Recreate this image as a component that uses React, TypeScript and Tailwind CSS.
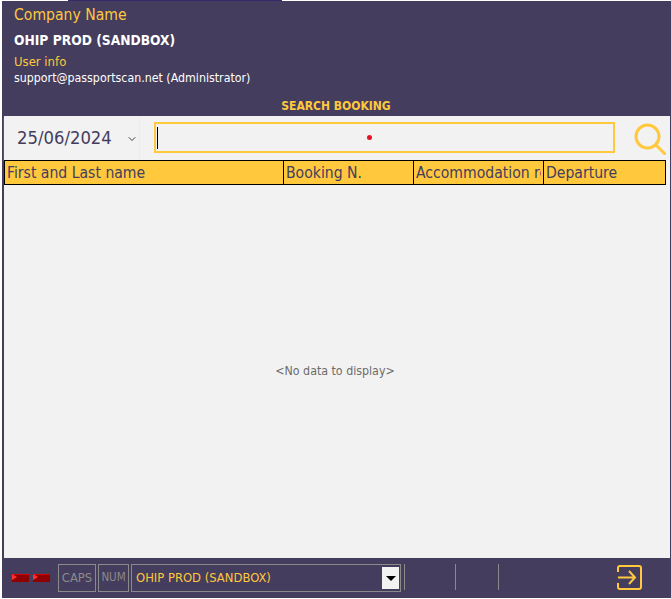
import { ChevronDown } from "lucide-react";

const font = "font-['DejaVu_Sans_Condensed','DejaVu_Sans',sans-serif]";

const columns = [
  { label: "First and Last name", width: "w-[279px]" },
  { label: "Booking N.", width: "w-[130px]" },
  { label: "Accommodation room", width: "w-[130px]" },
  { label: "Departure", width: "flex-1" },
];

const SearchIcon = () => (
  <svg width="32" height="32" viewBox="0 0 32 32" fill="none" stroke="#ffc83d" strokeWidth="3">
    <circle cx="13.5" cy="13.5" r="11.5" />
    <path d="M22 22 L31 31" strokeLinecap="round" />
  </svg>
);

const ExitIcon = () => (
  <svg width="25" height="25" viewBox="0 0 25 25" fill="none" stroke="#ffc83d" strokeWidth="2">
    <path d="M1 7 V3 Q1 1 3 1 H22 Q24 1 24 3 V22 Q24 24 22 24 H3 Q1 24 1 22 V18" />
    <path d="M1 12.5 H17 M12 6 L18 12.5 L12 19" />
  </svg>
);

const Led = () => (
  <svg width="17" height="8" viewBox="0 0 17 8">
    <rect width="17" height="8" fill="#8f0000" />
    <rect width="17" height="1" fill="#d80000" />
    <path d="M0 0 L5 3 L0 6 Z" fill="#ff3030" />
  </svg>
);

const App = () => {
  return (
    <div className={`w-[671px] h-[599px] overflow-hidden bg-white flex flex-col ${font}`}>
      <div className="ml-[68px] w-[214px] h-px shrink-0 bg-[#3b2a6b]" />
      <div className="ml-[2px] h-[597px] bg-[#443d5d] flex flex-col">
        <div className="h-[115px] shrink-0 flex flex-col pl-[12px]">
          <div className="text-[15.6px] leading-[20px] mt-[4px] text-[#ffc83d]">Company Name</div>
          <div className="text-[13.7px] leading-[20px] mt-[5px] font-bold text-white">OHIP PROD (SANDBOX)</div>
          <div className="text-[13px] leading-[16px] mt-[4px] text-[#ffc83d]">User info</div>
          <div className="text-[12.3px] leading-[16px] font-medium text-white">
            support@passportscan.net (Administrator)
          </div>
          <div className="text-[12px] leading-[14px] mt-[13px] font-bold text-[#ffc83d] text-center pr-[13px]">
            SEARCH BOOKING
          </div>
        </div>
        <div className="ml-[2px] mr-px flex-1 bg-[#f2f2f2] flex flex-col min-h-0">
          <div className="h-[44px] shrink-0 flex items-center">
            <div className="w-[135px] h-[43px] flex items-center pl-[13px] pb-[1px] text-[#443d5d] text-[18.3px] shadow-[0_1px_1px_#d0d0d0]">
              <span>25/06/2024</span>
              <ChevronDown className="ml-[14px] mt-[3px] text-[#444]" size={12} />
            </div>
            <div className="ml-[15px] mb-[1px] w-[461px] h-[31px] border-2 border-[#ffc83d] flex items-center pl-[1px] relative">
              <div className="w-px h-[22px] bg-black" />
              <div className="absolute left-[211px] top-[11px] w-[5px] h-[5px] rounded-full bg-[#e81123]" />
            </div>
            <div className="ml-[19px] mt-[1px]">
              <SearchIcon />
            </div>
          </div>
          <div className="h-[25px] shrink-0 mr-[4px] flex bg-[#ffc83d] border border-black">
            {columns.map((c, i) => (
              <div key={c.label} className={`${c.width} pl-[2px] pr-[2px] ${i < 3 ? "border-r border-black" : ""}`}>
                <div className="overflow-hidden whitespace-nowrap text-[15.6px] leading-[24px] text-[#443d5d]">
                  {c.label}
                </div>
              </div>
            ))}
          </div>
          <div className="flex-1 flex items-center justify-center pr-[4px] text-[12.3px] text-[#6b6b6b]">
            &lt;No data to display&gt;
          </div>
        </div>
        <div className="h-[40px] shrink-0 flex items-start pt-[6px] text-[12.9px]">
          <div className="ml-[10px] mt-[10px] flex gap-[4px]">
            <Led />
            <Led />
          </div>
          <div className="ml-[8px] w-[38px] h-[28px] border border-[#8a8a8a] text-[#8a8a8a] flex items-center justify-center">
            CAPS
          </div>
          <div className="ml-[2px] w-[31px] h-[28px] border border-[#8a8a8a] text-[#8a8a8a] flex items-center justify-center text-[11.5px]">
            NUM
          </div>
          <div className="ml-[2px] w-[270px] h-[28px] border border-[#8a8a8a] flex items-center justify-between pl-[4px] pr-[1px] text-[#ffc83d]">
            <span>OHIP PROD (SANDBOX)</span>
            <div className="w-[17px] h-[22px] bg-[#f2f2f2] flex items-center justify-center">
              <div className="w-0 h-0 border-x-[5px] border-x-transparent border-t-[5px] border-t-black" />
            </div>
          </div>
          <div className="ml-[3px] w-px h-[26px] bg-[#8a8a8a]" />
          <div className="ml-[50px] w-px h-[26px] bg-[#8a8a8a]" />
          <div className="ml-[42px] w-px h-[26px] bg-[#8a8a8a]" />
          <div className="ml-[118px] mt-[1px]">
            <ExitIcon />
          </div>
        </div>
      </div>
    </div>
  );
};

export default App;
